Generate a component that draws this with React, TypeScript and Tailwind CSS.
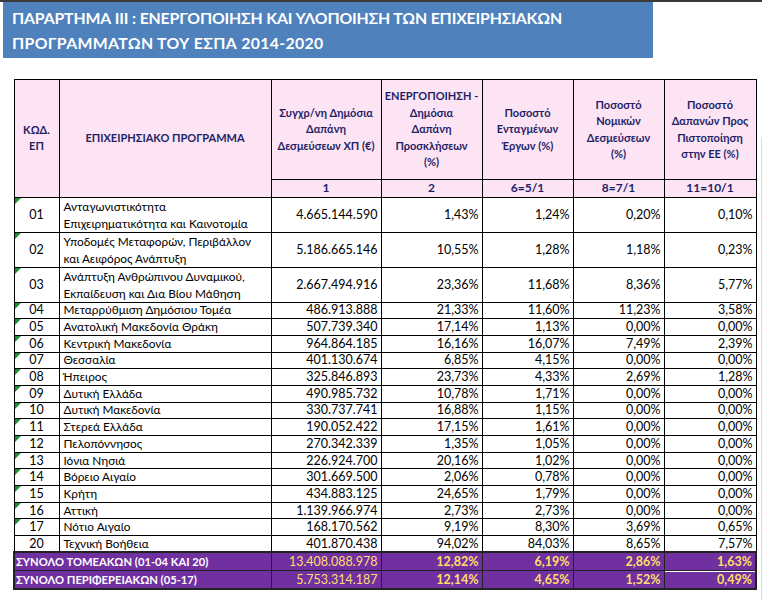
import React from "react";

type Row = {
	code: string;
	name: string[];
	amount: string;
	p2: string;
	p6: string;
	p8: string;
	p11: string;
	mark?: boolean;
};

const rows: Row[] = [
	{ code: "01", name: ["Ανταγωνιστικότητα", "Επιχειρηματικότητα και Καινοτομία"], amount: "4.665.144.590", p2: "1,43%", p6: "1,24%", p8: "0,20%", p11: "0,10%", mark: true },
	{ code: "02", name: ["Υποδομές Μεταφορών, Περιβάλλον", "και Αειφόρος Ανάπτυξη"], amount: "5.186.665.146", p2: "10,55%", p6: "1,28%", p8: "1,18%", p11: "0,23%", mark: true },
	{ code: "03", name: ["Ανάπτυξη Ανθρώπινου Δυναμικού,", "Εκπαίδευση και Δια Βίου Μάθηση"], amount: "2.667.494.916", p2: "23,36%", p6: "11,68%", p8: "8,36%", p11: "5,77%", mark: true },
	{ code: "04", name: ["Μεταρρύθμιση Δημόσιου Τομέα"], amount: "486.913.888", p2: "21,33%", p6: "11,60%", p8: "11,23%", p11: "3,58%", mark: true },
	{ code: "05", name: ["Ανατολική Μακεδονία Θράκη"], amount: "507.739.340", p2: "17,14%", p6: "1,13%", p8: "0,00%", p11: "0,00%", mark: true },
	{ code: "06", name: ["Κεντρική Μακεδονία"], amount: "964.864.185", p2: "16,16%", p6: "16,07%", p8: "7,49%", p11: "2,39%", mark: true },
	{ code: "07", name: ["Θεσσαλία"], amount: "401.130.674", p2: "6,85%", p6: "4,15%", p8: "0,00%", p11: "0,00%", mark: true },
	{ code: "08", name: ["Ήπειρος"], amount: "325.846.893", p2: "23,73%", p6: "4,33%", p8: "2,69%", p11: "1,28%", mark: true },
	{ code: "09", name: ["Δυτική Ελλάδα"], amount: "490.985.732", p2: "10,78%", p6: "1,71%", p8: "0,00%", p11: "0,00%", mark: true },
	{ code: "10", name: ["Δυτική Μακεδονία"], amount: "330.737.741", p2: "16,88%", p6: "1,15%", p8: "0,00%", p11: "0,00%", mark: true },
	{ code: "11", name: ["Στερεά Ελλάδα"], amount: "190.052.422", p2: "17,15%", p6: "1,61%", p8: "0,00%", p11: "0,00%", mark: true },
	{ code: "12", name: ["Πελοπόννησος"], amount: "270.342.339", p2: "1,35%", p6: "1,05%", p8: "0,00%", p11: "0,00%", mark: true },
	{ code: "13", name: ["Ιόνια Νησιά"], amount: "226.924.700", p2: "20,16%", p6: "1,02%", p8: "0,00%", p11: "0,00%", mark: true },
	{ code: "14", name: ["Βόρειο Αιγαίο"], amount: "301.669.500", p2: "2,06%", p6: "0,78%", p8: "0,00%", p11: "0,00%", mark: true },
	{ code: "15", name: ["Κρήτη"], amount: "434.883.125", p2: "24,65%", p6: "1,79%", p8: "0,00%", p11: "0,00%", mark: true },
	{ code: "16", name: ["Αττική"], amount: "1.139.966.974", p2: "2,73%", p6: "2,73%", p8: "0,00%", p11: "0,00%", mark: true },
	{ code: "17", name: ["Νότιο Αιγαίο"], amount: "168.170.562", p2: "9,19%", p6: "8,30%", p8: "3,69%", p11: "0,65%", mark: true },
	{ code: "20", name: ["Τεχνική Βοήθεια"], amount: "401.870.438", p2: "94,02%", p6: "84,03%", p8: "8,65%", p11: "7,57%" },
];

const totals = [
	{ label: "ΣΥΝΟΛΟ ΤΟΜΕΑΚΩΝ (01-04 ΚΑΙ 20)", amount: "13.408.088.978", p2: "12,82%", p6: "6,19%", p8: "2,86%", p11: "1,63%" },
	{ label: "ΣΥΝΟΛΟ ΠΕΡΙΦΕΡΕΙΑΚΩΝ (05-17)", amount: "5.753.314.187", p2: "12,14%", p6: "4,65%", p8: "1,52%", p11: "0,49%" },
];

const th = "border border-black bg-[#fce4f5] px-0 text-center align-middle font-bold whitespace-nowrap text-[#1f1f66] leading-[16.5px]";
const num = "border border-black px-[3px] text-right";
const tot = "border border-[#222] px-[3px] text-right font-bold text-[#ffdf6a]";

export default function App() {
	return (
		<div className="h-[600px] w-[762px] overflow-hidden border-t-2 border-[#3a3a3a] bg-white font-['Lato','Noto_Sans',sans-serif]">
			<div className="ml-[3px] flex h-[56px] w-[650px] flex-col justify-center whitespace-nowrap bg-[#4f81bd] px-[9px] text-[15.8px] font-bold leading-[25px] text-white">
				<div className="tracking-[-0.15px]">ΠΑΡΑΡΤΗΜΑ ΙΙΙ : ΕΝΕΡΓΟΠΟΙΗΣΗ ΚΑΙ ΥΛΟΠΟΙΗΣΗ ΤΩΝ ΕΠΙΧΕΙΡΗΣΙΑΚΩΝ</div>
				<div className="tracking-[0.35px]">ΠΡΟΓΡΑΜΜΑΤΩΝ ΤΟΥ ΕΣΠΑ 2014-2020</div>
			</div>

			<div className="flex items-start">
				<table className="ml-[13px] mt-[21px] w-[742px] table-fixed border-collapse text-[12.5px] leading-[14px] text-black">
					<colgroup>
						<col className="w-[45px]" />
						<col className="w-[212px]" />
						<col className="w-[110px]" />
						<col className="w-[101px]" />
						<col className="w-[91px]" />
						<col className="w-[91px]" />
						<col className="w-[92px]" />
					</colgroup>
					<thead className="text-[11px]">
						<tr className="h-[100px]">
							<th rowSpan={2} className={th}>
								ΚΩΔ.
								<br />
								ΕΠ
							</th>
							<th rowSpan={2} className={th}>
								ΕΠΙΧΕΙΡΗΣΙΑΚΟ ΠΡΟΓΡΑΜΜΑ
							</th>
							<th className={th}>
								Συγχρ/νη Δημόσια
								<br />
								Δαπάνη
								<br />
								Δεσμεύσεων ΧΠ (€)
							</th>
							<th className={th}>
								ΕΝΕΡΓΟΠΟΙΗΣΗ -
								<br />
								Δημόσια
								<br />
								Δαπάνη
								<br />
								Προσκλήσεων
								<br />
								(%)
							</th>
							<th className={th}>
								Ποσοστό
								<br />
								Ενταγμένων
								<br />
								Έργων (%)
							</th>
							<th className={th}>
								Ποσοστό
								<br />
								Νομικών
								<br />
								Δεσμεύσεων
								<br />
								(%)
							</th>
							<th className={th}>
								Ποσοστό
								<br />
								Δαπανών Προς
								<br />
								Πιστοποίηση
								<br />
								στην ΕΕ (%)
							</th>
						</tr>
						<tr className="h-[17px] text-[12px]">
							<th className={th}>1</th>
							<th className={th}>2</th>
							<th className={th}>6=5/1</th>
							<th className={th}>8=7/1</th>
							<th className={th}>11=10/1</th>
						</tr>
					</thead>
					<tbody>
						{rows.map((r) => (
							<tr key={r.code} className={r.name.length > 1 ? "h-[35px]" : "h-[16.7px]"}>
								<td className="relative border border-black text-center">
									{r.mark && (
										<span className="absolute left-0 top-0 h-0 w-0 border-r-[6px] border-t-[6px] border-r-transparent border-t-[#1f8f3a]" />
									)}
									{r.code}
								</td>
								<td
									className={
										r.name.length > 1
											? "whitespace-nowrap border border-black px-[4px] text-[11.8px] leading-[17px]"
											: "whitespace-nowrap border border-black px-[4px] text-[11.8px]"
									}
								>
									{r.name.map((n) => (
										<div key={n}>{n}</div>
									))}
								</td>
								<td className={num}>{r.amount}</td>
								<td className={num}>{r.p2}</td>
								<td className={num}>{r.p6}</td>
								<td className={num}>{r.p8}</td>
								<td className={num}>{r.p11}</td>
							</tr>
						))}
					</tbody>
					<tbody className="border-2 border-[#222] bg-[#7030a0]">
						{totals.map((t, i) => (
							<tr key={t.label} className="h-[18.5px]">
								<td colSpan={2} className="whitespace-nowrap border border-[#222] px-[1px] text-[11.2px] font-bold text-white">
									{t.label}
								</td>
								<td className="border border-[#222] px-[3px] text-right text-[#ffdf6a]">{t.amount}</td>
								<td className={tot}>{t.p2}</td>
								<td className={tot}>{t.p6}</td>
								<td className={tot}>{t.p8}</td>
								<td className={i === 1 ? `${tot} shadow-[inset_0_1px_0_#ffffff]` : tot}>{t.p11}</td>
							</tr>
						))}
					</tbody>
				</table>
				<div className="ml-[4px] mt-[79px] h-[520px] w-px shrink-0 bg-[#dcdcdc]" />
			</div>
		</div>
	);
}
